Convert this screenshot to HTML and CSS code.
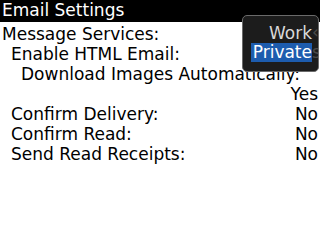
FILE: index.html
```html
<!DOCTYPE html>
<html lang="en">
<head>
    <meta charset="UTF-8">
    <title>Email Settings</title>
    <link rel="stylesheet" href="styles.css">
</head>
<body>

    <div class="screen">
        <div class="title-bar">Email Settings</div>

        <div class="settings">
            <div class="row">Message Services:</div>
            <div class="row indent-1">Enable HTML Email:</div>
            <div class="row indent-2">Download Images Automatically:</div>
            <div class="row value">Yes</div>
            <div class="row split indent-1">
                <span>Confirm Delivery:</span>
                <span class="choice">No</span>
            </div>
            <div class="row split indent-1">
                <span>Confirm Read:</span>
                <span class="choice">No</span>
            </div>
            <div class="row split indent-1">
                <span>Send Read Receipts:</span>
                <span class="choice">No</span>
            </div>
        </div>

        <!-- Choice popup for Message Services -->
        <div class="popup">
            <div class="popup-item">
                <span class="label">Work</span>
                <span class="ghost">&lsaquo;</span>
            </div>
            <div class="popup-item">
                <span class="label selected">Private</span>
                <span class="ghost">s</span>
            </div>
        </div>
    </div>

</body>
</html>
```

FILE: styles.css
```css
* {
    margin: 0;
    padding: 0;
    box-sizing: border-box;
}

body {
    font-family: "DejaVu Sans", sans-serif;
    background-color: #fff;
    width: 320px;
    height: 240px;
    overflow: hidden;
}

.screen {
    position: relative;
    width: 320px;
    height: 240px;
    background-color: #fff;
    color: #000;
}

.title-bar {
    background-color: #000;
    color: #fff;
    height: 22px;
    line-height: 21px;
    font-size: 17px;
    padding-left: 2px;
}

.settings {
    display: flex;
    flex-direction: column;
    padding-top: 2px;
}

.row {
    height: 20px;
    line-height: 20px;
    font-size: 17px;
    padding-left: 2px;
    padding-right: 2px;
    white-space: nowrap;
}

.indent-1 {
    padding-left: 11px;
}

.indent-2 {
    padding-left: 21px;
}

.value {
    text-align: right;
}

.split {
    display: flex;
    justify-content: space-between;
}

.popup {
    position: absolute;
    top: 15px;
    left: 242px;
    width: 77px;
    height: 57px;
    background-color: #1c1c1c;
    border: 1px solid #6a6a6a;
    border-radius: 5px;
    padding: 7px 0 0 8px;
    overflow: hidden;
}

.popup-item {
    display: flex;
    height: 20px;
    font-size: 17px;
    white-space: nowrap;
}

.label {
    width: 61px;
    flex: none;
    text-align: right;
    line-height: 20px;
    color: #d8d8d8;
}

.label.selected {
    background-color: #1d5cae;
    color: #fff;
    height: 19px;
    line-height: 19px;
}

.ghost {
    color: #4a4a4a;
    line-height: 19px;
}
```
